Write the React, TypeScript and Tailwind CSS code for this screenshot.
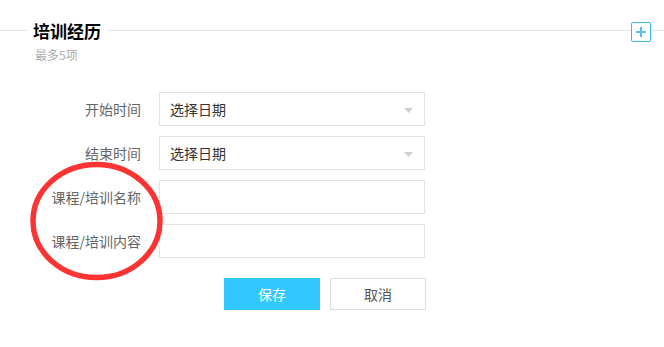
const font = { fontFamily: '"Noto Sans CJK SC", "Liberation Sans", sans-serif' }

interface RowProps {
  label: string
  value?: string
  select?: boolean
}

function FormRow({ label, value, select }: RowProps) {
  return (
    <div className="flex items-center h-[34px]">
      <div className="w-[141px] text-right text-[14px] text-[#666]">{label}</div>
      <div className="ml-[18px] w-[266px] h-[34px] border border-[#e3e3e3] bg-white flex items-center pl-[10px] pr-[11px]">
        <span className="flex-1 text-[14px] text-[#333]">{value}</span>
        {select && (
          <svg width="9" height="5" viewBox="0 0 9 5" className="mt-[2px]">
            <path d="M0 0 H9 L4.5 5 Z" fill="#cfcfcf" />
          </svg>
        )}
      </div>
    </div>
  )
}

export default function App() {
  return (
    <div className="relative w-[664px] h-[347px] bg-white overflow-hidden" style={font}>
      <div className="flex items-start pt-[22px]">
        <div className="w-[27px] h-px bg-[#e6e6e6] mt-[8px]" />
        <div className="px-[6px] text-[17px] leading-[18px] font-bold text-black">培训经历</div>
        <div className="flex-1 h-px bg-[#e6e6e6] mt-[8px]" />
        <button className="w-[20px] h-[20px] border border-[#3ab8f0] rounded-[2px] flex items-center justify-center">
          <svg width="12" height="12" viewBox="0 0 12 12">
            <path d="M6 1 V11 M1 6 H11" stroke="#56c0ef" strokeWidth="2" />
          </svg>
        </button>
        <div className="w-[13px] h-px bg-[#e6e6e6] mt-[8px]" />
      </div>
      <div className="pl-[35px] mt-[5px] text-[12px] leading-[16px] text-[#aaa]">最多5项</div>

      <div className="mt-[29px] flex flex-col gap-[10px]">
        <FormRow label="开始时间" value="选择日期" select />
        <FormRow label="结束时间" value="选择日期" select />
        <FormRow label="课程/培训名称" />
        <FormRow label="课程/培训内容" />
      </div>

      <div className="mt-[20px] flex pl-[224px] gap-[10px]">
        <button className="w-[96px] h-[32px] bg-[#33c7ff] text-white text-[14px]">保存</button>
        <button className="w-[96px] h-[32px] border border-[#dedede] bg-white text-[#555] text-[14px]">取消</button>
      </div>

      <svg className="absolute left-0 top-0 pointer-events-none" width="664" height="347">
        <ellipse cx="96.5" cy="221" rx="63.5" ry="56.5" fill="none" stroke="#fb3333" strokeWidth="5.5" />
      </svg>
    </div>
  )
}
